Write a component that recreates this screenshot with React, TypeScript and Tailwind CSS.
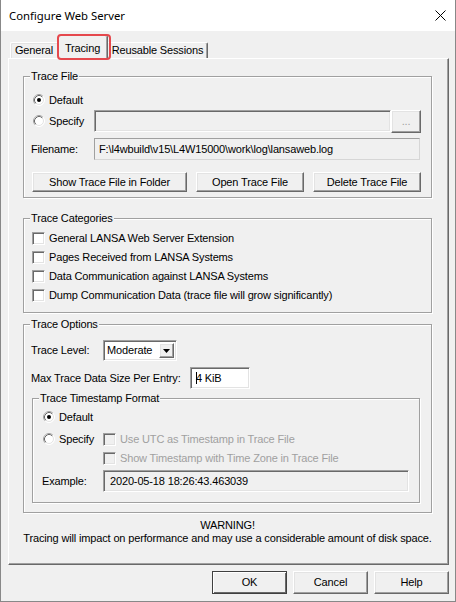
import React from "react";

const sunken =
  "border border-t-[#a0a0a0] border-l-[#a0a0a0] border-b-white border-r-white shadow-[inset_1px_1px_0_#696969,inset_-1px_-1px_0_#e3e3e3]";
const raised =
  "border border-t-white border-l-white border-b-[#696969] border-r-[#696969] shadow-[inset_-1px_-1px_0_#a0a0a0,inset_1px_1px_0_#e3e3e3]";

function Radio({ checked }: { checked?: boolean }) {
  return (
    <svg width="12" height="12" viewBox="0 0 12 12" className="shrink-0">
      <circle cx="6" cy="6" r="5.5" fill="#fff" stroke="#fff" />
      <path d="M2.11 9.89 A5.5 5.5 0 0 1 9.89 2.11" fill="none" stroke="#a0a0a0" />
      <circle cx="6" cy="6" r="4.5" fill="none" stroke="#e3e3e3" />
      <path d="M2.82 9.18 A4.5 4.5 0 0 1 9.18 2.82" fill="none" stroke="#696969" />
      {checked && <circle cx="6" cy="6" r="2" fill="#000" />}
    </svg>
  );
}

function Check({ disabled }: { disabled?: boolean }) {
  return (
    <span
      className={`block h-[13px] w-[13px] shrink-0 ${sunken} ${disabled ? "bg-[#f0f0f0]" : "bg-white"}`}
    />
  );
}

function Group({
  title,
  className,
  children,
}: {
  title: string;
  className: string;
  children: React.ReactNode;
}) {
  return (
    <div className={`relative border border-[#a0a0a0] shadow-[1px_1px_0_#fff,inset_1px_1px_0_#fff] ${className}`}>
      <span className="absolute left-[6px] top-[-8px] bg-[#f0f0f0] px-px leading-[14px]">{title}</span>
      {children}
    </div>
  );
}

function Button({ label, className }: { label: string; className: string }) {
  return (
    <div className={`flex items-center justify-center bg-[#f0f0f0] ${raised} ${className}`}>
      {label}
    </div>
  );
}

export default function App() {
  return (
    <div className="flex h-[602px] w-[456px] flex-col border-x border-b border-[#888888] bg-[#f0f0f0] font-['Liberation_Sans',Arial,sans-serif] text-[11px] leading-[13px] tracking-[-0.15px] whitespace-nowrap text-black">
      {/* title bar */}
      <div className="flex h-[31px] shrink-0 items-center justify-between bg-white pl-[8px] pr-[9px]">
        <span className="font-['Noto_Sans',sans-serif] text-[11.3px] leading-none tracking-normal text-black">Configure Web Server</span>
        <svg width="11" height="11" viewBox="0 0 11 11">
          <path d="M0.5 0.5 L10.5 10.5 M10.5 0.5 L0.5 10.5" stroke="#000" strokeWidth="1" />
        </svg>
      </div>

      {/* tabs */}
      <div className="flex h-[27px] shrink-0 items-end pl-[9px] pt-[4px]">
        <div className="flex h-[16px] w-[47px] items-center justify-center rounded-tl-[2px] border-l border-t border-white shadow-[inset_1px_1px_0_#e3e3e3]">
          General
        </div>
        <div className="relative z-10 -mb-px flex h-[24px] w-[51px] items-start justify-center rounded-t-[2px] border-l border-r border-t border-l-white border-r-[#696969] border-t-white bg-[#f0f0f0] pt-[6px] shadow-[inset_-1px_0_0_#a0a0a0]">
          Tracing
          <span className="absolute left-[-1px] top-[-2px] h-[26px] w-[54px] rounded-[4px] border-2 border-[#e5484d]" />
        </div>
        <div className="flex h-[16px] w-[100px] items-center justify-center rounded-tr-[2px] border-r border-t border-r-[#696969] border-t-white shadow-[inset_-1px_0_0_#a0a0a0]">
          Reusable Sessions
        </div>
      </div>

      {/* panel */}
      <div className="ml-[7px] mr-[6px] flex h-[507px] shrink-0 flex-col border border-t-white border-l-white border-b-[#696969] border-r-[#696969] shadow-[inset_-1px_-1px_0_#a0a0a0]">
        <div className="ml-[14px] mt-[17px] flex w-[409px] flex-col">
          <Group title="Trace File" className="h-[122px] pl-[8px] pt-[15px]">
            <div className="flex h-[16px] items-center gap-[4px] pl-[1px]">
              <Radio checked />
              <span>Default</span>
            </div>
            <div className="mt-[2px] flex h-[23px] items-start">
              <div className="flex h-[22px] w-[62px] items-center gap-[4px] pl-[1px]">
                <Radio />
                <span>Specify</span>
              </div>
              <div className={`h-[22px] w-[297px] bg-[#f0f0f0] ${sunken}`} />
              <Button label="..." className="h-[23px] w-[30px] text-[#a0a0a0]" />
            </div>
            <div className="mt-[5px] flex h-[22px] items-center">
              <span className="ml-[-1px] w-[63px]">Filename:</span>
              <div className="flex h-[22px] w-[326px] items-center border border-[#d6d6d6] border-t-[#a0a0a0] border-l-[#a0a0a0] bg-[#f0f0f0] pl-[4px]">
                F:\l4wbuild\v15\L4W15000\work\log\lansaweb.log
              </div>
            </div>
            <div className="mt-[12px] flex h-[20px]">
              <Button label="Show Trace File in Folder" className="h-[20px] w-[155px]" />
              <Button label="Open Trace File" className="ml-[9px] h-[20px] w-[108px]" />
              <Button label="Delete Trace File" className="ml-[9px] h-[20px] w-[108px]" />
            </div>
          </Group>

          <Group title="Trace Categories" className="mt-[20px] h-[95px] pl-[8px] pt-[10px]">
            {[
              "General LANSA Web Server Extension",
              "Pages Received from LANSA Systems",
              "Data Communication against LANSA Systems",
              "Dump Communication Data (trace file will grow significantly)",
            ].map((t) => (
              <div key={t} className="flex h-[19px] items-center gap-[4px]">
                <Check />
                <span>{t}</span>
              </div>
            ))}
          </Group>

          <Group title="Trace Options" className="mt-[11px] h-[189px] pt-[15px]">
            <div className="flex h-[21px] items-center pl-[7px]">
              <span className="w-[72px]">Trace Level:</span>
              <div className={`flex h-[21px] w-[74px] items-center justify-between bg-white pl-[3px] pr-[2px] ${sunken}`}>
                <span>Moderate</span>
                <div className={`flex h-[15px] w-[15px] items-center justify-center bg-[#f0f0f0] ${raised}`}>
                  <svg width="7" height="4" viewBox="0 0 7 4">
                    <path d="M0 0 H7 L3.5 4 Z" fill="#000" />
                  </svg>
                </div>
              </div>
            </div>
            <div className="mt-[6px] flex h-[22px] items-center pl-[7px]">
              <span className="w-[159px]">Max Trace Data Size Per Entry:</span>
              <div className={`flex h-[22px] w-[60px] items-center bg-white pl-[5px] ${sunken}`}>
                <span className="mr-[-1px] h-[12px] w-px bg-black" />
                <span>4 KiB</span>
              </div>
            </div>

            <Group title="Trace Timestamp Format" className="ml-[8px] mt-[9px] h-[105px] w-[388px] pt-[10px]">
              <div className="flex h-[16px] items-center gap-[4px] pl-[10px]">
                <Radio checked />
                <span>Default</span>
              </div>
              <div className="mt-[6px] flex h-[16px] items-center pl-[10px]">
                <div className="flex w-[60px] items-center gap-[4px]">
                  <Radio />
                  <span>Specify</span>
                </div>
                <Check disabled />
                <span className="ml-[4px] text-[#a0a0a0]">Use UTC as Timestamp in Trace File</span>
              </div>
              <div className="mt-[3px] flex h-[16px] items-center pl-[70px]">
                <Check disabled />
                <span className="ml-[4px] text-[#a0a0a0]">Show Timestamp with Time Zone in Trace File</span>
              </div>
              <div className="mt-[4px] flex h-[22px] items-center pl-[9px]">
                <span className="w-[61px]">Example:</span>
                <div className={`flex h-[22px] w-[306px] items-center bg-[#f0f0f0] pl-[6px] ${sunken}`}>
                  2020-05-18 18:26:43.463039
                </div>
              </div>
            </Group>
          </Group>

          <div className="mt-[6px] flex flex-col items-center">
            <span>WARNING!</span>
            <span>Tracing will impact on performance and may use a considerable amount of disk space.</span>
          </div>
        </div>
      </div>

      {/* dialog buttons */}
      <div className="mr-[6px] mt-[6px] flex justify-end gap-[6px]">
        <div className="flex h-[23px] w-[75px] items-center justify-center border border-[#404040] bg-[#f0f0f0] shadow-[inset_1px_1px_0_#fff,inset_-1px_-1px_0_#696969]">
          OK
        </div>
        <Button label="Cancel" className="h-[23px] w-[75px]" />
        <Button label="Help" className="h-[23px] w-[75px]" />
      </div>
    </div>
  );
}
